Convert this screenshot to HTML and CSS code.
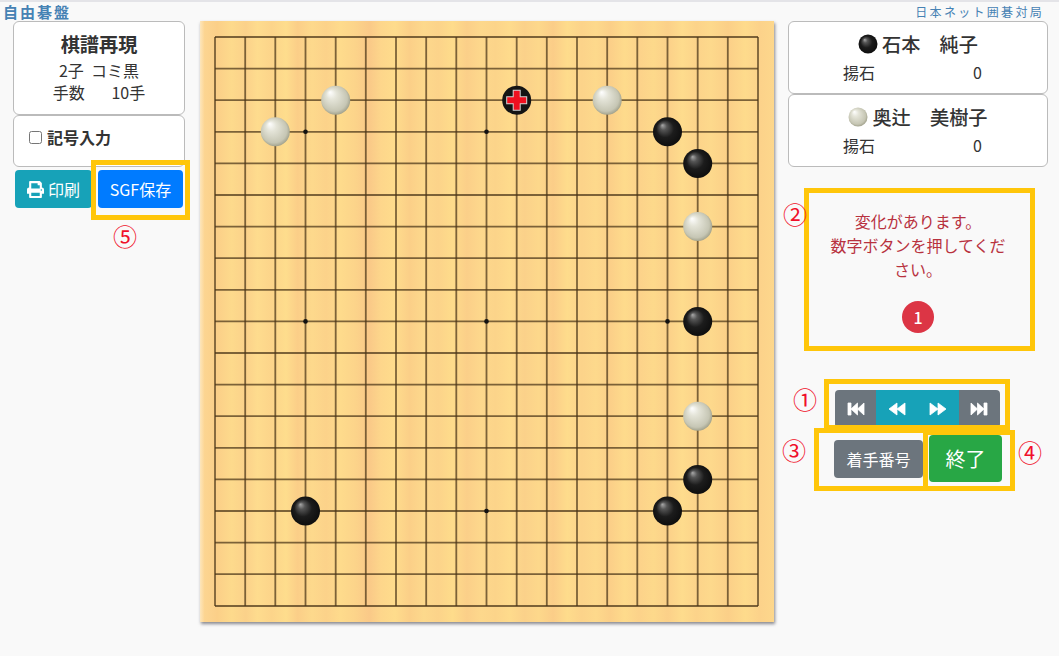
FILE: index.html
```html
<!DOCTYPE html>
<html lang="ja">
<head>
    <meta charset="UTF-8">
    <meta name="viewport" content="width=device-width, initial-scale=1.0">
    <title>自由碁盤</title>
    <link rel="stylesheet" href="styles.css">
</head>
<body>
    <div class="page">
        <header class="top">
            <span class="site-title">自由碁盤</span>
            <span class="site-link">日本ネット囲碁対局</span>
        </header>

        <div class="main">
            <!-- 左側 -->
            <div class="left">
                <div class="card info-card">
                    <div class="card-title">棋譜再現</div>
                    <div class="info-line">2子&nbsp;&nbsp;コミ黒</div>
                    <div class="info-line">手数　&nbsp;&nbsp;&nbsp;10手</div>
                </div>
                <div class="card mark-card">
                    <label class="mark-label"><input type="checkbox" class="mark-check">記号入力</label>
                </div>
                <div class="left-buttons">
                    <button class="btn btn-teal btn-print">
                        <svg class="print-icon" viewBox="0 0 512 512"><path fill="currentColor" d="M448 192V77.25c0-8.49-3.37-16.62-9.37-22.63L393.37 9.37c-6-6-14.14-9.37-22.63-9.37H96C78.33 0 64 14.33 64 32v160c-35.35 0-64 28.65-64 64v112c0 8.84 7.16 16 16 16h48v96c0 17.67 14.33 32 32 32h320c17.67 0 32-14.33 32-32v-96h48c8.84 0 16-7.16 16-16V256c0-35.35-28.65-64-64-64zm-64 256H128v-96h256v96zm0-224H128V64h192v48c0 8.84 7.16 16 16 16h48v96zm48 72c-13.25 0-24-10.75-24-24 0-13.26 10.75-24 24-24s24 10.74 24 24c0 13.25-10.75 24-24 24z"/></svg>印刷
                    </button>
                    <button class="btn btn-blue btn-sgf">SGF保存</button>
                </div>
            </div>

            <!-- 碁盤 -->
            <div class="board">
                <svg class="board-svg" width="574" height="601" viewBox="0 0 574 601">
                    <defs>
                        <linearGradient id="wood" x1="0" y1="0" x2="1" y2="0">
                            <stop offset="0" stop-color="#fde6bc"/>
                            <stop offset="0.008" stop-color="#fcd591"/>
                            <stop offset="0.03" stop-color="#fbcf88"/>
                            <stop offset="0.055" stop-color="#fdda8c"/>
                            <stop offset="0.08" stop-color="#fbd18a"/>
                            <stop offset="0.1" stop-color="#fedc8e"/>
                            <stop offset="0.125" stop-color="#fcd48a"/>
                            <stop offset="0.15" stop-color="#fedd8d"/>
                            <stop offset="0.17" stop-color="#fbce88"/>
                            <stop offset="0.195" stop-color="#fdd98c"/>
                            <stop offset="0.22" stop-color="#fcd28a"/>
                            <stop offset="0.245" stop-color="#fedb8c"/>
                            <stop offset="0.27" stop-color="#fcd48a"/>
                            <stop offset="0.295" stop-color="#fac988"/>
                            <stop offset="0.315" stop-color="#fdd68b"/>
                            <stop offset="0.34" stop-color="#fedc8c"/>
                            <stop offset="0.365" stop-color="#fbcf88"/>
                            <stop offset="0.39" stop-color="#fdd98c"/>
                            <stop offset="0.415" stop-color="#fcd38a"/>
                            <stop offset="0.44" stop-color="#fedc8b"/>
                            <stop offset="0.465" stop-color="#fbcf89"/>
                            <stop offset="0.49" stop-color="#fdd88c"/>
                            <stop offset="0.515" stop-color="#fcd48a"/>
                            <stop offset="0.54" stop-color="#fedb8c"/>
                            <stop offset="0.565" stop-color="#fbd18a"/>
                            <stop offset="0.59" stop-color="#fdd88b"/>
                            <stop offset="0.615" stop-color="#fbcd88"/>
                            <stop offset="0.64" stop-color="#fedc8c"/>
                            <stop offset="0.665" stop-color="#fcd38a"/>
                            <stop offset="0.69" stop-color="#fdd98c"/>
                            <stop offset="0.715" stop-color="#fbcf88"/>
                            <stop offset="0.74" stop-color="#fedb8c"/>
                            <stop offset="0.765" stop-color="#fcd28a"/>
                            <stop offset="0.79" stop-color="#fdd98b"/>
                            <stop offset="0.815" stop-color="#fbd089"/>
                            <stop offset="0.84" stop-color="#fedc8d"/>
                            <stop offset="0.865" stop-color="#fcd38a"/>
                            <stop offset="0.89" stop-color="#fdd98c"/>
                            <stop offset="0.92" stop-color="#fbcf88"/>
                            <stop offset="0.95" stop-color="#fedb8c"/>
                            <stop offset="0.975" stop-color="#fcd28a"/>
                            <stop offset="1" stop-color="#fdd78c"/>
                        </linearGradient>
                        <radialGradient id="blackStone" cx="0.5" cy="0.5" r="0.55" fx="0.32" fy="0.27">
                            <stop offset="0" stop-color="#a9a9a9"/>
                            <stop offset="0.22" stop-color="#555"/>
                            <stop offset="0.55" stop-color="#1c1c1c"/>
                            <stop offset="1" stop-color="#0c0c0c"/>
                        </radialGradient>
                        <radialGradient id="whiteStone" cx="0.5" cy="0.5" r="0.6" fx="0.3" fy="0.22">
                            <stop offset="0" stop-color="#ffffff"/>
                            <stop offset="0.3" stop-color="#e4e4d8"/>
                            <stop offset="0.75" stop-color="#c6c6b4"/>
                            <stop offset="1" stop-color="#86866e"/>
                        </radialGradient>
                        <circle id="b" r="14.5" fill="url(#blackStone)"/>
                        <circle id="w" r="14.5" fill="url(#whiteStone)"/>
                    </defs>
                    <rect width="574" height="601" fill="url(#wood)"/>
                    <g transform="translate(15 16)">
                        <path class="grid" d="M0 0H543M0 31.6H543M0 63.2H543M0 94.8H543M0 126.4H543M0 158H543M0 189.6H543M0 221.2H543M0 252.8H543M0 284.4H543M0 316H543M0 347.6H543M0 379.2H543M0 410.8H543M0 442.4H543M0 474H543M0 505.6H543M0 537.2H543M0 569H543"/>
                        <path class="grid" d="M0 0V569M30.2 0V569M60.3 0V569M90.5 0V569M120.7 0V569M150.8 0V569M181 0V569M211.2 0V569M241.3 0V569M271.5 0V569M301.7 0V569M331.8 0V569M362 0V569M392.2 0V569M422.3 0V569M452.5 0V569M482.7 0V569M512.8 0V569M543 0V569"/>
                        <g class="stars">
                            <circle cx="90.5" cy="94.8" r="2.3"/>
                            <circle cx="271.5" cy="94.8" r="2.3"/>
                            <circle cx="452.5" cy="94.8" r="2.3"/>
                            <circle cx="90.5" cy="284.4" r="2.3"/>
                            <circle cx="271.5" cy="284.4" r="2.3"/>
                            <circle cx="452.5" cy="284.4" r="2.3"/>
                            <circle cx="90.5" cy="474" r="2.3"/>
                            <circle cx="271.5" cy="474" r="2.3"/>
                            <circle cx="452.5" cy="474" r="2.3"/>
                        </g>
                        <use href="#w" x="60.3" y="94.8"/>
                        <use href="#w" x="120.7" y="63.2"/>
                        <use href="#w" x="392.2" y="63.2"/>
                        <use href="#w" x="482.7" y="189.6"/>
                        <use href="#w" x="482.7" y="379.2"/>
                        <use href="#b" x="452.5" y="94.8"/>
                        <use href="#b" x="482.7" y="126.4"/>
                        <use href="#b" x="482.7" y="284.4"/>
                        <use href="#b" x="482.7" y="442.4"/>
                        <use href="#b" x="452.5" y="474"/>
                        <use href="#b" x="90.5" y="474"/>
                        <circle cx="301.7" cy="63.2" r="14.5" fill="#141414"/>
                        <!-- 最終手の印 -->
                        <path d="M297.7 52.7h8v6.5h6.5v8h-6.5v6.5h-8v-6.5h-6.500v-8h6.500z" fill="#d4d4d4"/>
                        <path d="M298.7 53.7h6v6.5h6.5v6h-6.5v6.5h-6v-6.5h-6.500v-6h6.500z" fill="#f01020"/>
                    </g>
                </svg>
            </div>

            <!-- 右側 -->
            <div class="right">
                <div class="card player-card">
                    <div class="card-title player-name">
                        <svg class="name-stone" width="20" height="20" viewBox="-10 -10 20 20"><circle r="9.5" fill="url(#blackStone)"/></svg>石本　純子
                    </div>
                    <div class="score"><span>揚石</span><span>0</span></div>
                </div>
                <div class="card player-card">
                    <div class="card-title player-name">
                        <svg class="name-stone" width="20" height="20" viewBox="-10 -10 20 20"><circle r="9.5" fill="url(#whiteStone)"/></svg>奥辻　美樹子
                    </div>
                    <div class="score"><span>揚石</span><span>0</span></div>
                </div>

                <div class="message">
                    <p class="message-text">変化があります。<br>数字ボタンを押してください。</p>
                    <span class="variation">1</span>
                </div>

                <div class="nav-group">
                    <button class="nav-btn nav-gray">
                        <svg class="nav-icon" viewBox="0 0 18 14"><path d="M1 1h3v12H1zM4 7l6.500-6v12zM10.500 7l6.500-6v12z"/></svg>
                    </button>
                    <button class="nav-btn nav-teal">
                        <svg class="nav-icon" viewBox="0 0 18 14"><path d="M1 7l8-6v12zM9 7l8-6v12z"/></svg>
                    </button>
                    <button class="nav-btn nav-teal">
                        <svg class="nav-icon" viewBox="0 0 18 14"><path d="M17 7L9 1v12zM9 7L1 1v12z"/></svg>
                    </button>
                    <button class="nav-btn nav-gray">
                        <svg class="nav-icon" viewBox="0 0 18 14"><path d="M17 1h-3v12h3zM14 7L7.500 1v12zM7.500 7L1 1v12z"/></svg>
                    </button>
                </div>

                <div class="action-row">
                    <button class="btn btn-gray btn-number">着手番号</button>
                    <button class="btn btn-green btn-finish">終了</button>
                </div>
            </div>
        </div>

        <!-- 説明用の枠と番号 -->
        <div class="frame frame-sgf"></div>
        <div class="frame frame-message"></div>
        <div class="frame frame-nav"></div>
        <div class="frame frame-number"></div>
        <div class="frame frame-finish"></div>
        <span class="mark mark-1">①</span>
        <span class="mark mark-2">②</span>
        <span class="mark mark-3">③</span>
        <span class="mark mark-4">④</span>
        <span class="mark mark-5">⑤</span>
    </div>
</body>
</html>
```

FILE: styles.css
```css
* {
    box-sizing: border-box;
}
html, body {
    margin: 0;
    padding: 0;
}
body {
    font-family: "Noto Sans CJK JP", "Noto Sans", sans-serif;
    font-size: 16px;
    color: #333;
    background-color: #f9f9f9;
}
.page {
    position: relative;
    width: 1059px;
    height: 656px;
    overflow: hidden;
    border-top: 2px solid #e4e4e8;
}
.top {
    display: flex;
    justify-content: space-between;
    align-items: center;
    height: 19px;
    padding: 0 15px 0 3px;
}
.site-title {
    font-size: 15px;
    font-weight: bold;
    letter-spacing: 2px;
    color: #4682b4;
}
.site-link {
    font-size: 12px;
    letter-spacing: 2.3px;
    color: #4682b4;
}
.main {
    display: grid;
    grid-template-columns: 172px 574px 259px;
    column-gap: 15px;
    padding-left: 13px;
    align-items: start;
}
.board {
    width: 574px;
    height: 601px;
    box-shadow: 1px 2px 3px rgba(60, 60, 70, 0.6);
}
.board-svg {
    display: block;
}
.grid {
    fill: none;
    stroke: #4a3518;
    stroke-opacity: 0.72;
    stroke-width: 1.8;
}
.stars {
    fill: #111;
}
.right {
    margin-left: -1px;
}
.card {
    background: #fff;
    border: 1px solid #bbb;
    border-radius: 6px;
}
.info-card {
    height: 94px;
    padding-top: 7px;
    text-align: center;
}
.card-title {
    font-size: 19.2px;
    font-weight: bold;
    line-height: 30px;
}
.info-line {
    font-size: 16px;
    line-height: 22px;
}
.mark-card {
    height: 52px;
    padding: 9px 15px;
}
.mark-label {
    display: flex;
    align-items: center;
    font-size: 16px;
    font-weight: bold;
    line-height: 24px;
}
.mark-check {
    width: 13px;
    height: 13px;
    margin: 0 5px 0 0;
}
.left-buttons {
    display: flex;
    gap: 6px;
    margin-top: 3px;
    padding-left: 2px;
}
.btn {
    display: inline-flex;
    align-items: center;
    justify-content: center;
    border: none;
    border-radius: 4px;
    color: #fff;
    font-family: inherit;
    font-size: 16px;
}
.btn-print {
    width: 77px;
    height: 38px;
}
.btn-sgf {
    width: 85px;
    height: 38px;
}
.btn-teal {
    background-color: #17a2b8;
}
.btn-blue {
    background-color: #007bff;
}
.btn-gray {
    background-color: #6c757d;
}
.btn-green {
    background-color: #28a745;
}
.print-icon {
    width: 17px;
    height: 17px;
    margin-right: 4px;
}
.player-card {
    height: 73px;
    padding-top: 7px;
    text-align: center;
}
.player-name {
    display: flex;
    align-items: center;
    justify-content: center;
    font-weight: 500;
}
.name-stone {
    margin-right: 4px;
}
.score {
    display: flex;
    justify-content: space-between;
    margin: 1px 65px 0 54px;
    font-size: 16px;
    line-height: 24px;
}
.message {
    width: 190px;
    margin: 42px auto 0;
    text-align: center;
}
.message-text {
    margin: 0;
    height: 92px;
    font-size: 16px;
    line-height: 24px;
    color: #b8323f;
}
.variation {
    display: inline-flex;
    align-items: center;
    justify-content: center;
    width: 32px;
    height: 32px;
    border-radius: 50%;
    background-color: #dc3545;
    color: #fff;
    font-size: 16px;
    font-weight: 500;
}
.nav-group {
    display: flex;
    width: 165px;
    height: 38px;
    margin: 57px 0 0 47px;
    border-radius: 4px;
    overflow: hidden;
}
.nav-btn {
    display: flex;
    align-items: center;
    justify-content: center;
    flex: 1;
    padding: 0;
    border: none;
}
.nav-gray {
    background-color: #6c757d;
}
.nav-teal {
    background-color: #17a2b8;
}
.nav-icon {
    width: 18px;
    height: 14px;
    fill: #fff;
    stroke: #fff;
    stroke-width: 0.8;
    stroke-linejoin: round;
}
.action-row {
    display: flex;
    align-items: center;
    gap: 6px;
    margin: 7px 0 0 46px;
}
.btn-number {
    width: 89px;
    height: 38px;
}
.btn-finish {
    width: 73px;
    height: 47px;
    font-size: 20px;
}
.frame {
    position: absolute;
    border: 5px solid #ffc60a;
    pointer-events: none;
}
.frame-sgf {
    left: 91px;
    top: 158px;
    width: 99px;
    height: 60px;
}
.frame-message {
    left: 804px;
    top: 186px;
    width: 231px;
    height: 163px;
}
.frame-nav {
    left: 824px;
    top: 377px;
    width: 186px;
    height: 51px;
}
.frame-number {
    left: 814px;
    top: 426px;
    width: 114px;
    height: 63px;
}
.frame-finish {
    left: 923px;
    top: 428px;
    width: 92px;
    height: 61px;
}
.mark {
    position: absolute;
    font-size: 24px;
    line-height: 24px;
    color: #f0102a;
}
.mark-1 {
    left: 793px;
    top: 385px;
}
.mark-2 {
    left: 783px;
    top: 200px;
}
.mark-3 {
    left: 782px;
    top: 436px;
}
.mark-4 {
    left: 1018px;
    top: 438px;
}
.mark-5 {
    left: 113px;
    top: 222px;
}
```
